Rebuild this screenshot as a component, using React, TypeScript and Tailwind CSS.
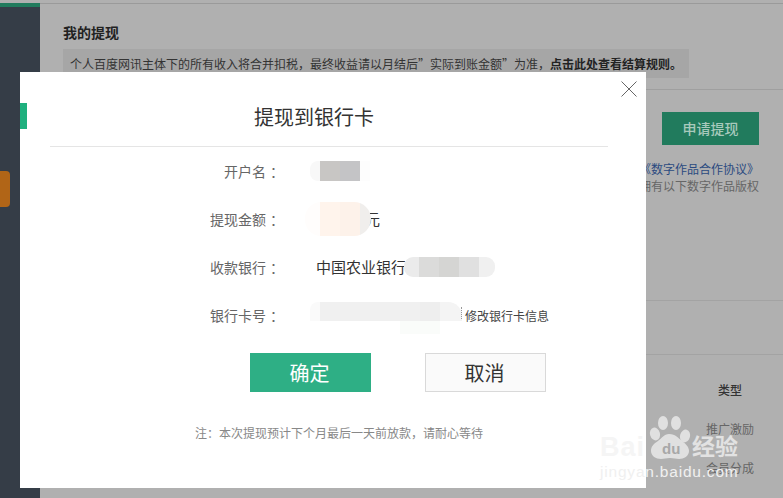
const font = { fontFamily: '"Noto Sans CJK SC", "Liberation Sans", sans-serif' };
const latin = { fontFamily: '"Liberation Sans", sans-serif' };

function Cell({ className, color }: { className: string; color: string }) {
  return <div className={`h-full ${className}`} style={{ background: color }} />;
}

function Row({ label, children, className = "" }: { label: string; children: React.ReactNode; className?: string }) {
  return (
    <div className={`flex items-center h-5 ${className}`}>
      <div className="w-[256px] text-right text-[14px] leading-5 text-[#666] whitespace-nowrap">
        {label}
        <span className="inline-block ml-1 -mr-2 text-left">：</span>
      </div>
      <div className="ml-[41px] flex items-center text-[15px] leading-5 text-[#333]">{children}</div>
    </div>
  );
}

function Watermark() {
  return (
    <div className="absolute left-[600px] top-[412px] w-[150px] h-[82px] pointer-events-none">
      <svg className="absolute left-[47px] top-0" width="46" height="50" viewBox="0 0 46 50" fill="#e6e6e6" fillOpacity="0.9">
        <ellipse cx="16" cy="11" rx="5" ry="7" />
        <ellipse cx="29" cy="11" rx="5" ry="7" />
        <ellipse cx="8" cy="22" rx="5" ry="6.5" transform="rotate(-15 8 22)" />
        <ellipse cx="38" cy="24" rx="5" ry="6.5" transform="rotate(15 38 24)" />
        <path d="M22 22c-5 0-7 4-11 7-5 3-7 6-7 10 0 5 5 8 10 8 3 0 5-1 9-1s6 1 9 1c5 0 10-3 10-8 0-4-3-7-7-10-4-3-6-7-13-7z" />
      </svg>
      <span className="absolute left-[62px] top-[27px] text-[15px] leading-5 font-bold text-[#a8a8a8]" style={latin}>du</span>
      <span className="absolute left-0 top-[19px] text-[27px] leading-8 font-bold text-[#f5f5f5] tracking-[1px]" style={latin}>Bai</span>
      <span className="absolute left-[92px] top-[17px] text-[23px] leading-8 font-bold text-[#e2e2e2]" style={font}>经验</span>
      <span className="absolute left-0 top-[50px] text-[15.5px] leading-5 text-[#f0f0f0] tracking-[0.8px]" style={latin}>jingyan.baidu.com</span>
    </div>
  );
}

export default function App() {
  return (
    <div className="relative w-[783px] h-[498px] overflow-hidden bg-[#b0b0b0] flex" style={font}>
      <aside className="w-10 h-full bg-[#353d47] shrink-0 flex flex-col">
        <div className="h-[3px] bg-[#b0b0b0]" />
        <div className="h-1 bg-[#217b5d]" />
        <div className="mt-[164px] w-2.5 h-9 bg-[#b16517] rounded-r-sm" />
      </aside>

      <main className="flex-1 flex flex-col">
        <div className="h-1 border-b border-[#9a9a9a] bg-[#b0b0b0]" />
        <div className="pl-[23px] pr-[24px]">
          <h2 className="mt-[19px] text-[14px] leading-[18px] font-bold text-[#222]">我的提现</h2>
          <div className="mt-[8px] w-[626px] h-[29px] bg-[#a6a6a6] pl-[7px] text-[12px] leading-[29px] text-[#333] whitespace-nowrap">
            个人百度网讯主体下的所有收入将合并扣税，最终收益请以月结后”实际到账金额”为准，<b className="font-bold text-[#222]">点击此处查看结算规则。</b>
          </div>
        </div>
        <div className="mt-[11px] h-px bg-[#9f9f9f]" />
        <div className="flex flex-col items-end pr-6">
          <div className="mt-[22px] w-[97px] h-[33px] bg-[#217b5d] text-[#a8c9bc] text-[14px] leading-[33px] text-center font-medium">申请提现</div>
          <div className="mt-[15px] text-[12px] leading-[17px] text-[#2b4a80] whitespace-nowrap">《数字作品合作协议》</div>
          <div className="text-[12px] leading-[17px] text-[#666] whitespace-nowrap">拥有以下数字作品版权</div>
        </div>
        <div className="mt-[106px] h-px bg-[#a3a3a3]" />
        <div className="mt-[53px] h-px bg-[#a3a3a3]" />
        <div className="mt-[26px] ml-[678px] text-[12px] leading-[17px] font-medium text-[#333] whitespace-nowrap">类型</div>
        <div className="mt-[22px] ml-[666px] text-[12px] leading-[17px] text-[#666] whitespace-nowrap">推广激励</div>
        <div className="mt-[22px] ml-[666px] text-[12px] leading-[17px] text-[#666] whitespace-nowrap">会员分成</div>
      </main>

      <div className="absolute left-5 top-[72px] w-[626px] h-[416px] bg-white flex flex-col">
        <div className="absolute left-0 top-[31px] w-[7px] h-[26px] bg-[#1fb07e]" />
        <svg className="absolute right-[9px] top-[9px]" width="16" height="16" viewBox="0 0 16 16" stroke="#666" strokeWidth="1" fill="none">
          <path d="M0.5 0.5L15.5 15.5M15.5 0.5L0.5 15.5" />
        </svg>
        <h1 className="mt-[29px] ml-[30px] w-[558px] h-[46px] border-b border-[#e5e5e5] pr-[30px] text-center text-[20px] leading-[32px] font-normal text-[#333]">提现到银行卡</h1>

        <Row label="开户名" className="mt-[14px]">
          <div className="flex h-5 w-[60px] -ml-[7px] rounded-l-lg overflow-hidden">
            <Cell className="w-2.5" color="#f8f8f8" />
            <Cell className="w-5" color="#c8c6c4" />
            <Cell className="w-5" color="#c4c4c6" />
            <Cell className="w-2.5" color="#fdfdfd" />
          </div>
        </Row>
        <Row label="提现金额" className="mt-[28px]">
          <div className="relative z-10 flex h-[34px] w-[66px] -ml-3 rounded-l-[16px] rounded-r-[17px] overflow-hidden">
            <Cell className="w-[15px]" color="#fffdfc" />
            <Cell className="w-5" color="#fff4ec" />
            <Cell className="w-5" color="#fdf2ea" />
            <Cell className="flex-1" color="#f0eeec" />
          </div>
          <span className="-ml-[6px]">元</span>
        </Row>
        <Row label="收款银行" className="mt-[28px]">
          <span className="w-[88px] -ml-px whitespace-nowrap">中国农业银行</span>
          <div className="relative flex h-5 w-[91px] rounded-[9px] overflow-hidden">
            <Cell className="w-[15px]" color="#ebebeb" />
            <Cell className="w-5" color="#dbdbda" />
            <Cell className="w-5" color="#d5d5d3" />
            <Cell className="w-5" color="#e0e0e0" />
            <Cell className="flex-1" color="#f0f0f0" />
          </div>
        </Row>
        <Row label="银行卡号" className="mt-[28px]">
          <div className="flex flex-col -ml-[7px] h-[32px] mt-[6px]">
            <div className="flex h-[19px] w-[152px] rounded-tl-lg rounded-tr-[14px] overflow-hidden">
              <Cell className="w-2.5" color="#fafafa" />
              <Cell className="w-[100px]" color="#f0f0f0" />
              <Cell className="w-5" color="#eeeeee" />
              <Cell className="flex-1" color="#f4f4f4" />
            </div>
            <div className="flex h-[13px]">
              <Cell className="w-[90px]" color="#ffffff" />
              <Cell className="w-10" color="#fafcfa" />
            </div>
          </div>
          <div className="h-3 w-px border-l border-dotted border-[#999] -mt-[4px] -ml-px" />
          <span className="ml-[3px] text-[12px] text-[#444] mt-[1px] whitespace-nowrap">修改银行卡信息</span>
        </Row>

        <div className="mt-[28px] ml-[230px] flex gap-[54px]">
          <button className="w-[121px] h-[39px] bg-[#2eaf85] pr-[2px] text-white text-[20px] leading-[39px]">确定</button>
          <button className="w-[121px] h-[39px] bg-[#fafafa] border border-[#d9d9d9] pr-[2px] text-[#333] text-[20px] leading-[37px]">取消</button>
        </div>

        <p className="mt-[32px] text-[12px] leading-[17px] text-[#888] pl-[175px] whitespace-nowrap">注：本次提现预计下个月最后一天前放款，请耐心等待</p>
      </div>

      <Watermark />
    </div>
  );
}
